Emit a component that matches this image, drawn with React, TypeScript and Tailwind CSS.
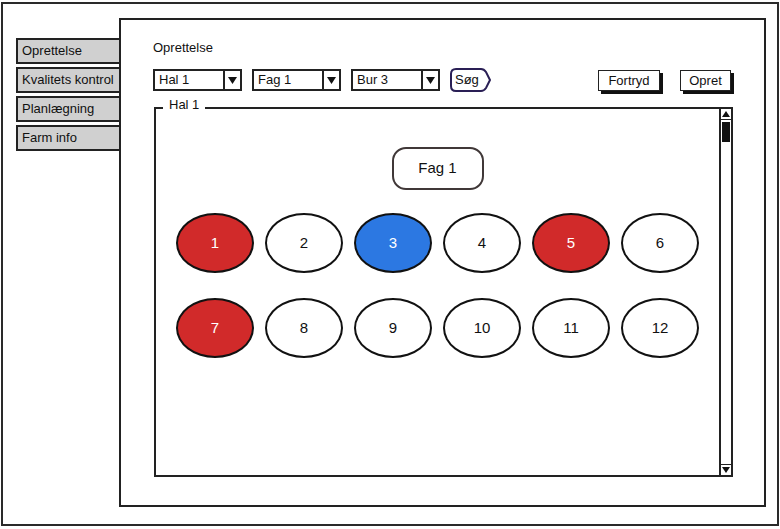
import React from "react";

const circles = [
  { n: 1, c: "red" },
  { n: 2, c: "white" },
  { n: 3, c: "blue" },
  { n: 4, c: "white" },
  { n: 5, c: "red" },
  { n: 6, c: "white" },
  { n: 7, c: "red" },
  { n: 8, c: "white" },
  { n: 9, c: "white" },
  { n: 10, c: "white" },
  { n: 11, c: "white" },
  { n: 12, c: "white" },
];

function Combo({ label }: { label: string }) {
  return (
    <div className="flex h-[22px] w-[89px] border-2 border-[#222] bg-white">
      <div className="flex-1 pl-[4px] text-[13px] leading-[18px] text-[#111]">{label}</div>
      <div className="flex w-[17px] items-center justify-center border-l-2 border-[#222]">
        <svg width="9" height="7" viewBox="0 0 9 7">
          <path d="M0 0 H9 L4.5 7 Z" fill="#111" />
        </svg>
      </div>
    </div>
  );
}

function ShadowButton({ label, w }: { label: string; w: string }) {
  return (
    <div className={`${w} h-[21px] border border-[#222] bg-white shadow-[3px_3px_0_#111] text-center text-[13px] leading-[19px] text-[#111]`}>
      {label}
    </div>
  );
}

export default function App() {
  return (
    <div className="h-[529px] w-[780px] bg-white pb-[3px] pl-[1px] pr-[1px] pt-[2px] font-['Liberation_Sans',Arial,sans-serif] text-[#111]">
      <div className="flex h-full border-2 border-[#2a2a2a] pb-[17px] pl-[13px] pr-[11px] pt-[14px]">
        {/* Tabs */}
        <div className="flex w-[103px] flex-col gap-[3px] pt-[20px]">
          {["Oprettelse", "Kvalitets kontrol", "Planlægning", "Farm info"].map((t) => (
            <div
              key={t}
              className="h-[26px] border-2 border-r-0 border-[#222] bg-[#d0d0d0] pl-[4px] text-[13px] leading-[22px] whitespace-nowrap"
            >
              {t}
            </div>
          ))}
        </div>

        {/* Window */}
        <div className="flex flex-1 flex-col border-2 border-[#222] pl-[32px] pr-[31px]">
          <div className="pt-[20px] text-[13px] leading-[16px]">Oprettelse</div>

          <div className="mt-[11px] flex h-[26px] items-center">
            <Combo label="Hal 1" />
            <div className="ml-[10px]">
              <Combo label="Fag 1" />
            </div>
            <div className="ml-[10px]">
              <Combo label="Bur 3" />
            </div>
            <div className="relative ml-[9px] h-[26px] w-[43px]">
              <svg className="absolute inset-0" width="43" height="26" viewBox="0 0 43 26">
                <path
                  d="M7 2 H32 Q35 2 37 5 L41 13 L37 21 Q35 24 32 24 H7 Q2 24 2 19 V7 Q2 2 7 2 Z"
                  fill="white"
                  stroke="#2a1f55"
                  strokeWidth="2"
                />
              </svg>
              <span className="absolute left-[6px] top-[4px] text-[13px] leading-[18px]">Søg</span>
            </div>
            <div className="ml-auto">
              <ShadowButton label="Fortryd" w="w-[62px]" />
            </div>
            <div className="ml-[20px] mr-[2px]">
              <ShadowButton label="Opret" w="w-[51px]" />
            </div>
          </div>

          <div className="ml-[1px] mt-[14px] flex h-[370px]">
            <div className="relative flex flex-1 flex-col items-center border-b-2 border-l-2 border-t-2 border-[#222]">
              <div className="absolute -top-[12px] left-[7px] bg-white px-[6px] text-[13px] leading-[16px]">Hal 1</div>
              <div className="mt-[38px] flex h-[43px] w-[92px] items-center justify-center rounded-[14px] border-2 border-[#403838] text-[15px]">
                Fag 1
              </div>
              <div className="mt-[23px] grid grid-cols-[repeat(6,78px)] gap-x-[11px] gap-y-[25px]">
                {circles.map((c) => (
                  <div
                    key={c.n}
                    className={
                      c.c === "red"
                        ? "flex h-[60px] w-[78px] items-center justify-center rounded-[50%] border-2 border-[#111] bg-[#d12a2a] text-[15px] text-white"
                        : c.c === "blue"
                        ? "flex h-[60px] w-[78px] items-center justify-center rounded-[50%] border-2 border-[#111] bg-[#2c78e2] text-[15px] text-white"
                        : "flex h-[60px] w-[78px] items-center justify-center rounded-[50%] border-2 border-[#111] bg-white text-[15px] text-[#111]"
                    }
                  >
                    {c.n}
                  </div>
                ))}
              </div>
            </div>
            <div className="flex w-[14px] flex-col border-2 border-[#222]">
              <div className="flex h-[11px] items-center justify-center border-b border-[#222]">
                <svg width="8" height="6" viewBox="0 0 8 6">
                  <path d="M4 0 L8 6 H0 Z" fill="#111" />
                </svg>
              </div>
              <div className="mx-auto mt-[2px] h-[20px] w-[8px] bg-[#111]" />
              <div className="flex-1" />
              <div className="flex h-[11px] items-center justify-center border-t border-[#222]">
                <svg width="8" height="6" viewBox="0 0 8 6">
                  <path d="M0 0 H8 L4 6 Z" fill="#111" />
                </svg>
              </div>
            </div>
          </div>
        </div>
      </div>
    </div>
  );
}
